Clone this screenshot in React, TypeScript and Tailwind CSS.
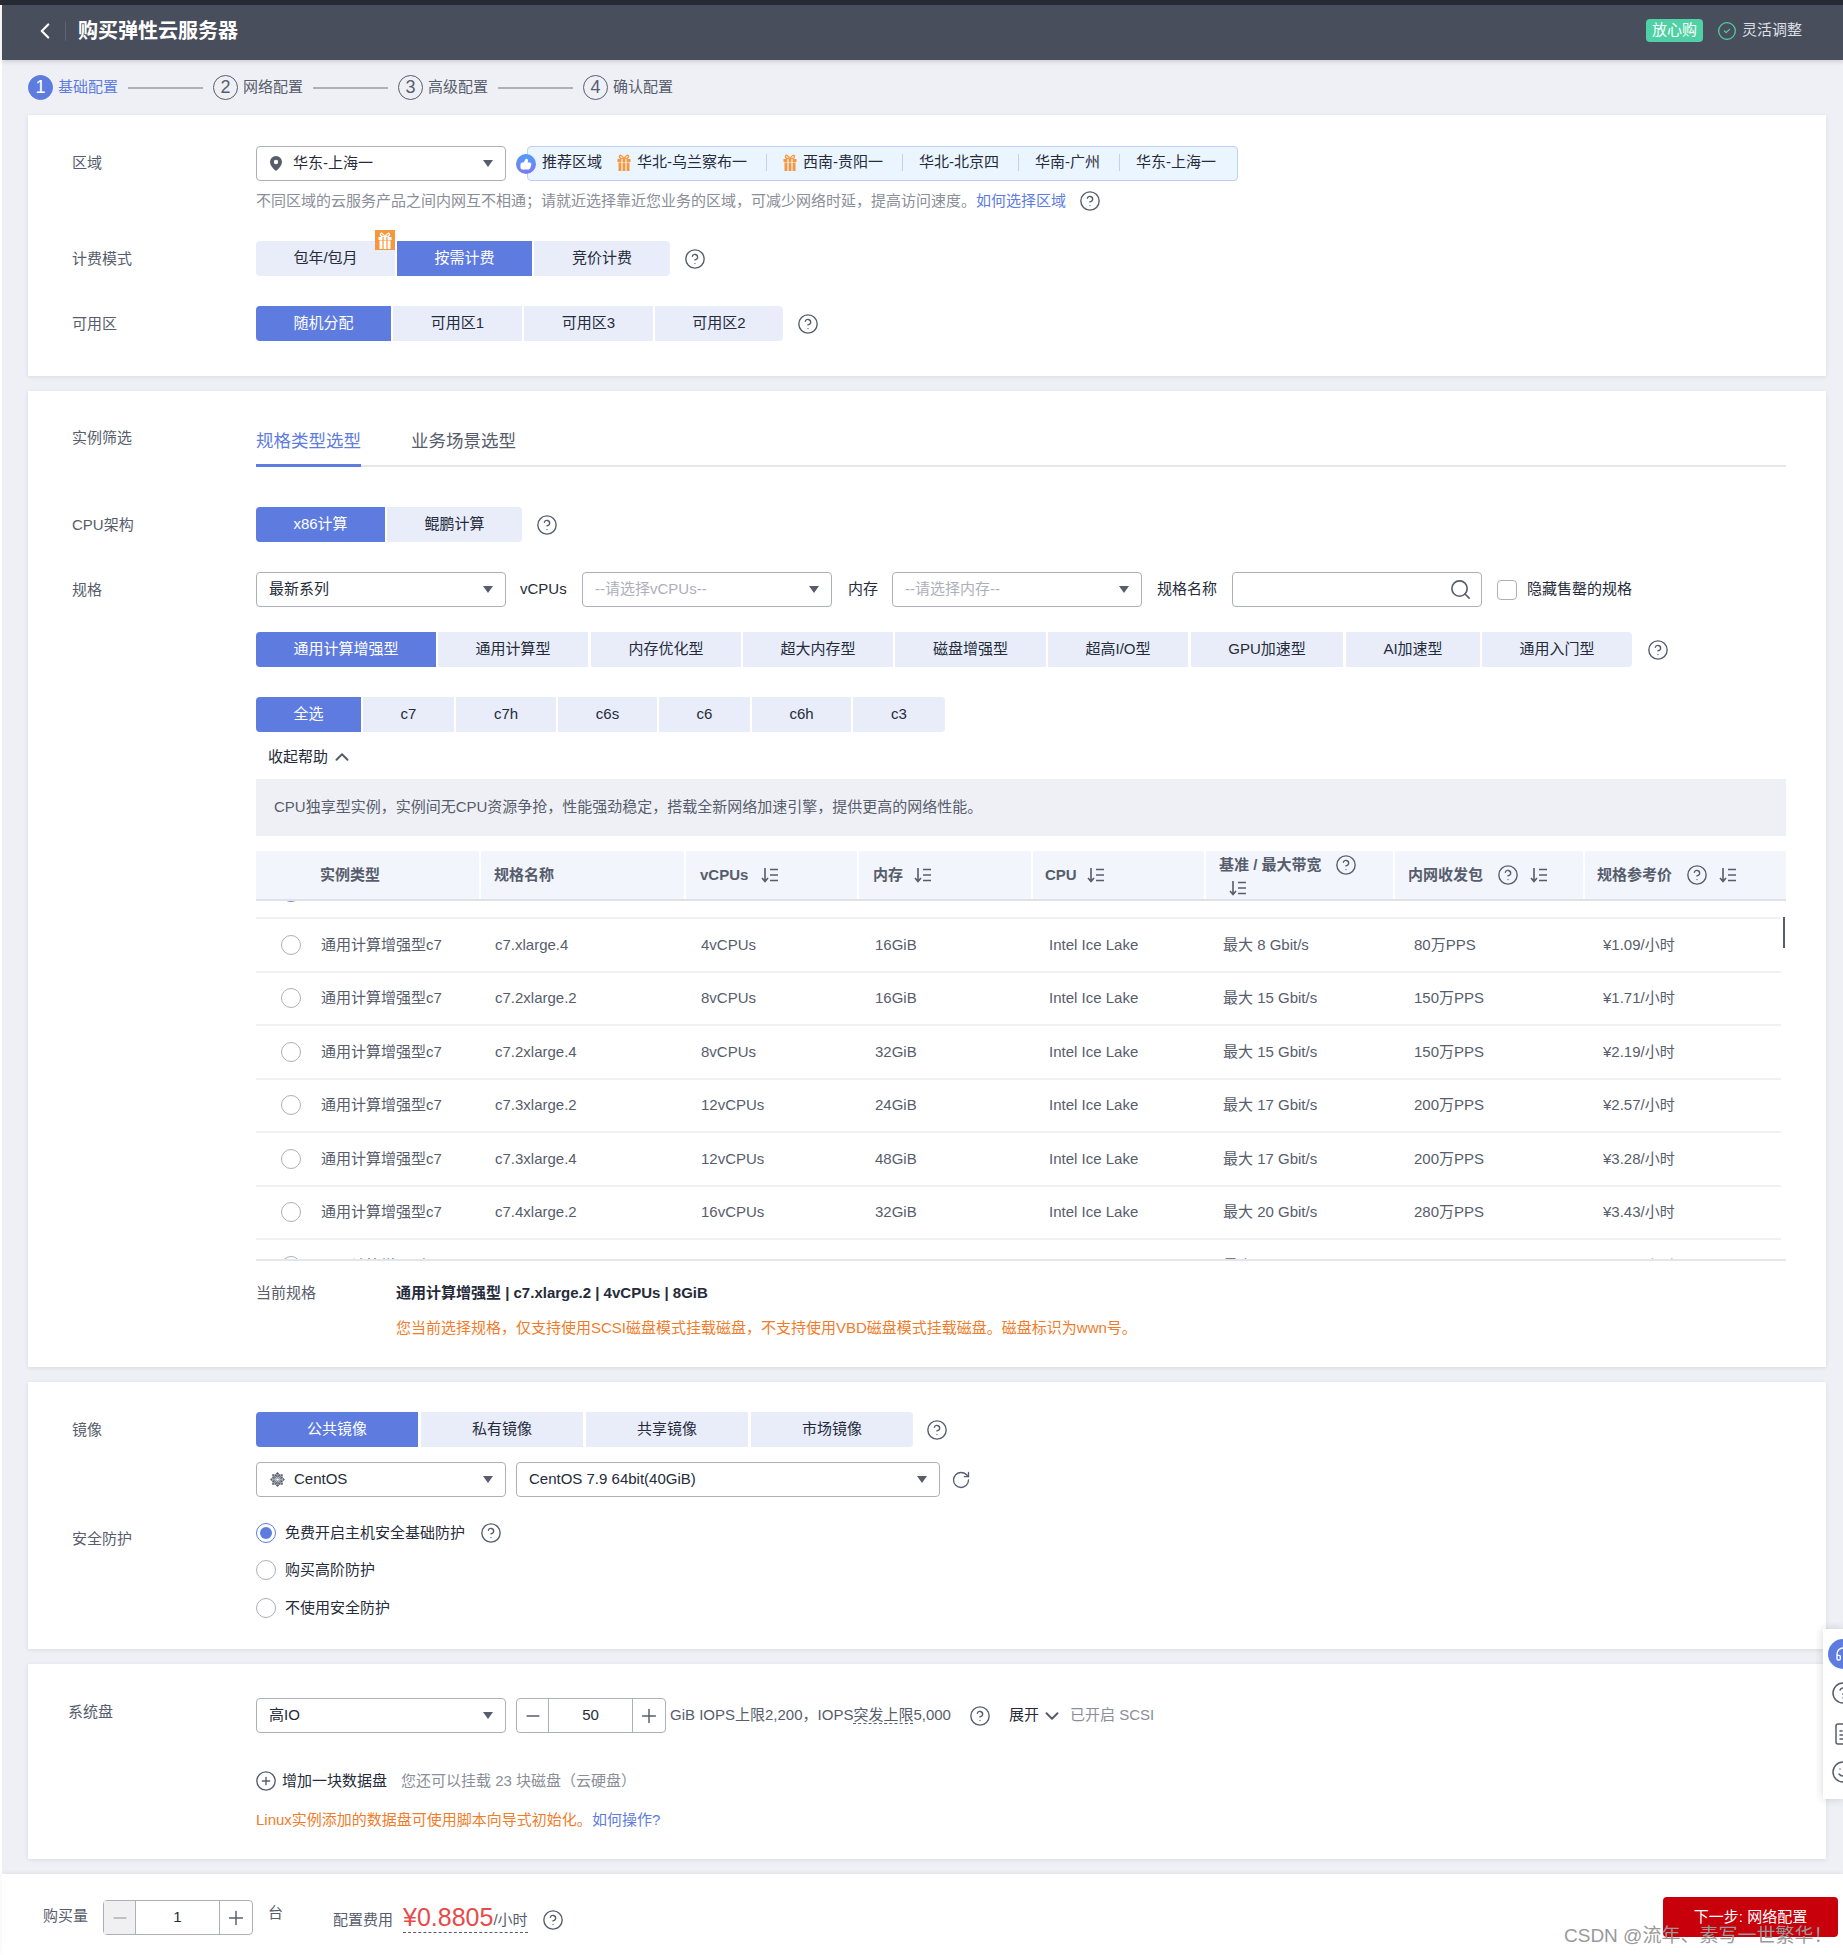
import { ChevronLeft, ChevronDown, ChevronUp, CircleCheck, CircleHelp, CirclePlus, FileText, Headphones, Minus, Plus, RotateCw, Search, Smile, ThumbsUp } from 'lucide-react'
import { FaCentos } from 'react-icons/fa'
import type { ReactNode } from 'react'

const columns = 'grid grid-cols-[225px_205px_173px_174px_173px_189px_190px_201px]'

const rows = [
  ['c7.xlarge.4', '4vCPUs', '16GiB', '最大 8 Gbit/s', '80万PPS', '¥1.09/小时'],
  ['c7.2xlarge.2', '8vCPUs', '16GiB', '最大 15 Gbit/s', '150万PPS', '¥1.71/小时'],
  ['c7.2xlarge.4', '8vCPUs', '32GiB', '最大 15 Gbit/s', '150万PPS', '¥2.19/小时'],
  ['c7.3xlarge.2', '12vCPUs', '24GiB', '最大 17 Gbit/s', '200万PPS', '¥2.57/小时'],
  ['c7.3xlarge.4', '12vCPUs', '48GiB', '最大 17 Gbit/s', '200万PPS', '¥3.28/小时'],
  ['c7.4xlarge.2', '16vCPUs', '32GiB', '最大 20 Gbit/s', '280万PPS', '¥3.43/小时'],
  ['c7.4xlarge.4', '16vCPUs', '64GiB', '最大 20 Gbit/s', '280万PPS', '¥4.37/小时'],
]

const Help = ({ className = '' }: { className?: string }) => (
  <CircleHelp size={22} strokeWidth={1.5} className={`shrink-0 text-[#575d6c] ${className}`} />
)

const Caret = () => (
  <svg width="10" height="7" viewBox="0 0 10 7" className="shrink-0">
    <polygon points="0,0 10,0 5,7" fill="#575d6c" />
  </svg>
)

const Pin = () => (
  <svg width="12" height="15" viewBox="0 0 12 15" className="ml-[1px] mr-[3px] shrink-0">
    <path fillRule="evenodd" fill="#575d6c" d="M6 0a6 6 0 0 1 6 6c0 3.500-4 7.500-6 9-2-1.500-6-5.500-6-9a6 6 0 0 1 6-6zm0 3.800a2.200 2.200 0 1 0 0 4.400 2.200 2.200 0 0 0 0-4.400z" />
  </svg>
)

const GiftIcon = ({ color, line, className = '' }: { color: string; line: string; className?: string }) => (
  <svg width="14" height="17" viewBox="0 0 14 17" className={`shrink-0 ${className}`}>
    <path d="M7 5C5.500 1.500 2.500 0 2.500 2.500 2.500 4.500 5 5 7 5c2 0 4.500-.5 4.500-2.500C11.500 0 8.500 1.500 7 5z" fill="none" stroke={color} strokeWidth="1.400" />
    <rect x="0.500" y="5" width="13" height="3" fill={color} />
    <rect x="1.500" y="8.500" width="11" height="8.500" fill={color} />
    <path d="M5 5v12M9 5v12" stroke={line} strokeWidth="1.200" />
  </svg>
)

const SortIcon = () => (
  <svg width="18" height="16" viewBox="0 0 18 16" fill="none" stroke="#575d6c" strokeWidth="1.6" className="shrink-0">
    <path d="M4 1v13M1 11l3 3.500L7 11M9 2.500h8M9 8h8M9 13.500h8" />
  </svg>
)

const Select = ({ width, placeholder, icon, children }: { width: string; placeholder?: boolean; icon?: ReactNode; children: ReactNode }) => (
  <div className={`flex h-[35px] shrink-0 items-center justify-between rounded-sm border border-[#adb0b8] bg-white pl-3 pr-[12px] ${width}`}>
    <span className={`flex items-center gap-2 ${placeholder ? 'text-[#adb0b8]' : ''}`}>
      {icon}
      {children}
    </span>
    <Caret />
  </div>
)

const Segment = ({ width, active, first, last, children }: { width: string; active?: boolean; first?: boolean; last?: boolean; children: ReactNode }) => (
  <div
    className={`flex h-[35px] shrink-0 items-center justify-center ${width} ${active ? 'bg-[#5e7ce0] text-white' : 'bg-[#e9edfa]'} ${first ? 'rounded-l-sm' : ''} ${last ? 'rounded-r-sm' : ''}`}
  >
    {children}
  </div>
)

const Row = ({ label, labelClass = '', className = '', children }: { label: string; labelClass?: string; className?: string; children: ReactNode }) => (
  <div className={`flex ${className}`}>
    <div className={`w-[184px] shrink-0 leading-[35px] text-[#575d6c] ${labelClass}`}>{label}</div>
    <div className="min-w-0 flex-1">{children}</div>
  </div>
)

const Radio = ({ checked }: { checked?: boolean }) => (
  <span className={`flex h-5 w-5 shrink-0 items-center justify-center rounded-full border bg-white ${checked ? 'border-[#5e7ce0]' : 'border-[#adb0b8]'}`}>
    {checked && <span className="h-3 w-3 rounded-full bg-[#5e7ce0]" />}
  </span>
)

const Stepper = ({ value, minusDisabled }: { value: string; minusDisabled?: boolean }) => (
  <div className="flex h-[35px] w-[150px] shrink-0 rounded-sm border border-[#adb0b8] bg-white">
    <div className={`flex w-[32px] items-center justify-center border-r border-[#adb0b8] ${minusDisabled ? 'bg-[#f0f0f3] text-[#adb0b8]' : 'text-[#575d6c]'}`}>
      <Minus size={20} strokeWidth={2} />
    </div>
    <div className="flex flex-1 items-center justify-center">{value}</div>
    <div className="flex w-[33px] items-center justify-center border-l border-[#adb0b8] text-[#575d6c]">
      <Plus size={22} strokeWidth={1.6} />
    </div>
  </div>
)

const Step = ({ n, label, active }: { n: number; label: string; active?: boolean }) => (
  <div className="flex items-center gap-[5px]">
    <span className={`flex h-[25px] w-[25px] items-center justify-center rounded-full border text-[18px] ${active ? 'border-[#5e7ce0] bg-[#5e7ce0] text-white' : 'border-[#575d6c] text-[#575d6c]'}`}>{n}</span>
    <span className={active ? 'text-[#5e7ce0]' : 'text-[#575d6c]'}>{label}</span>
  </div>
)

const Divider = () => <span className="ml-[19px] mr-[16px] h-[17px] w-px bg-[#c5d0f0]" />

const Card = ({ className, children }: { className: string; children: ReactNode }) => (
  <section className={`ml-[26px] w-[1798px] bg-white pl-[44px] pr-[40px] shadow-[0_1px_4px_rgba(37,43,58,0.1)] ${className}`}>{children}</section>
)

export default function App() {
  return (
    <div className="relative h-[1955px] w-full overflow-hidden bg-white font-['Liberation_Sans','Noto_Sans_CJK_SC',sans-serif] text-[15px] text-[#252b3a]">
      <div className="h-[5px] bg-[#262a33]" />
      <div className="ml-[2px] h-[1950px] bg-[#eef0f5]">
        <header className="flex h-[55px] items-center bg-[#484e5c] pb-[4px] text-white shadow-[0_2px_4px_rgba(37,43,58,0.15)]">
          <ChevronLeft size={26} strokeWidth={2} className="ml-[30px]" />
          <span className="ml-[7px] h-[20px] w-px bg-[#5c6270]" />
          <h1 className="ml-[12px] text-[20px] font-bold">购买弹性云服务器</h1>
          <span className="ml-auto flex h-[23px] w-[57px] items-center justify-center rounded-sm bg-[#4fd1a5]">放心购</span>
          <CircleCheck size={20} strokeWidth={1.5} className="ml-[14px] text-[#4fd1a5]" />
          <span className="ml-[5px] mr-[41px] text-[#dfe1e6]">灵活调整</span>
        </header>

        <div className="flex h-[55px] items-center pl-[26px]">
          <Step n={1} label="基础配置" active />
          <span className="mx-[10px] h-[2px] w-[75px] bg-[#adb0b8]" />
          <Step n={2} label="网络配置" />
          <span className="mx-[10px] h-[2px] w-[75px] bg-[#adb0b8]" />
          <Step n={3} label="高级配置" />
          <span className="mx-[10px] h-[2px] w-[75px] bg-[#adb0b8]" />
          <Step n={4} label="确认配置" />
        </div>

        <div className="flex flex-col gap-[15px]">
          <Card className="h-[261px] pt-[31px]">
            <Row label="区域" labelClass="-mt-[1px]">
              <div className="flex items-center">
                <Select width="w-[250px]" icon={<Pin />}>华东-上海一</Select>
                <span className="z-10 ml-[10px] flex h-5 w-5 shrink-0 items-center justify-center rounded-full bg-gradient-to-b from-[#4a9df5] to-[#7a78f0]">
                  <ThumbsUp size={12} className="fill-white text-white" />
                </span>
                <div className="-ml-[9px] flex h-[35px] w-[711px] items-center rounded-sm border border-[#bdd0f5] bg-[#ebf5ff] pb-[2px] pl-[14px]">
                  <span>推荐区域</span>
                  <GiftIcon color="#f6973e" line="#ebf5ff" className="ml-[15px] mr-[6px]" />
                  <span>华北-乌兰察布一</span>
                  <Divider />
                  <GiftIcon color="#f6973e" line="#ebf5ff" className="mr-[6px]" />
                  <span>西南-贵阳一</span>
                  <Divider />
                  <span>华北-北京四</span>
                  <Divider />
                  <span>华南-广州</span>
                  <Divider />
                  <span>华东-上海一</span>
                </div>
              </div>
              <div className="mt-[8px] flex h-[24px] items-center text-[#8a8e99]">
                不同区域的云服务产品之间内网互不相通；请就近选择靠近您业务的区域，可减少网络时延，提高访问速度。
                <span className="text-[#5e7ce0]">如何选择区域</span>
                <Help className="ml-[13px]" />
              </div>
            </Row>

            <Row label="计费模式" className="mt-[28px]">
              <div className="flex items-center gap-[2px]">
                <div className="relative">
                  <Segment width="w-[139px]" first>包年/包月</Segment>
                  <span className="absolute -top-[11px] right-0 flex h-5 w-5 items-center justify-center bg-[#f6973e]">
                    <GiftIcon color="#ffffff" line="#f6973e" />
                  </span>
                </div>
                <Segment width="w-[135px]" active>按需计费</Segment>
                <Segment width="w-[136px]" last>竞价计费</Segment>
                <Help className="ml-[12px]" />
              </div>
            </Row>

            <Row label="可用区" className="mt-[30px]">
              <div className="flex items-center gap-[2px]">
                <Segment width="w-[135px]" active first>随机分配</Segment>
                <Segment width="w-[129px]">可用区1</Segment>
                <Segment width="w-[129px]">可用区3</Segment>
                <Segment width="w-[128px]" last>可用区2</Segment>
                <Help className="ml-[12px]" />
              </div>
            </Row>
          </Card>

          <Card className="h-[976px] pt-[29px]">
            <Row label="实例筛选">
              <div className="flex h-[47px] border-b-2 border-[#e4e6ec] text-[17.5px]">
                <div className="h-[47px] w-[105px] whitespace-nowrap border-b-[3px] border-[#5e7ce0] pt-[8px] text-[#5e7ce0]">规格类型选型</div>
                <div className="ml-[50px] whitespace-nowrap pt-[8px] text-[#575d6c]">业务场景选型</div>
              </div>
            </Row>

            <Row label="CPU架构" className="mt-[40px]">
              <div className="flex items-center gap-[2px]">
                <Segment width="w-[129px]" active first>x86计算</Segment>
                <Segment width="w-[135px]" last>鲲鹏计算</Segment>
                <Help className="ml-[12px]" />
              </div>
            </Row>

            <Row label="规格" className="mt-[30px]">
              <div className="flex items-center">
                <Select width="w-[250px]">最新系列</Select>
                <span className="ml-[14px] w-[62px]">vCPUs</span>
                <Select width="w-[250px]" placeholder>--请选择vCPUs--</Select>
                <span className="ml-[16px] w-[44px]">内存</span>
                <Select width="w-[250px]" placeholder>--请选择内存--</Select>
                <span className="ml-[15px] w-[75px]">规格名称</span>
                <div className="flex h-[35px] w-[250px] items-center justify-end rounded-sm border border-[#adb0b8] pr-[9px]">
                  <Search size={23} strokeWidth={1.7} className="text-[#575d6c]" />
                </div>
                <span className="ml-[15px] h-5 w-5 rounded-sm border border-[#adb0b8]" />
                <span className="ml-[10px]">隐藏售罄的规格</span>
              </div>

              <div className="mt-[25px] flex items-center">
                <Segment width="w-[180px] mr-[2px]" active first>通用计算增强型</Segment>
                <Segment width="w-[150px] mr-[3px]">通用计算型</Segment>
                <Segment width="w-[150px] mr-[2px]">内存优化型</Segment>
                <Segment width="w-[150px] mr-[2px]">超大内存型</Segment>
                <Segment width="w-[151px] mr-[2px]">磁盘增强型</Segment>
                <Segment width="w-[140px] mr-[3px]">超高I/O型</Segment>
                <Segment width="w-[152px] mr-[3px]">GPU加速型</Segment>
                <Segment width="w-[134px] mr-[2px]">AI加速型</Segment>
                <Segment width="w-[150px]" last>通用入门型</Segment>
                <Help className="ml-[15px]" />
              </div>

              <div className="mt-[30px] flex gap-[2px]">
                <Segment width="w-[105px]" active first>全选</Segment>
                <Segment width="w-[91px]">c7</Segment>
                <Segment width="w-[100px]">c7h</Segment>
                <Segment width="w-[99px]">c6s</Segment>
                <Segment width="w-[91px]">c6</Segment>
                <Segment width="w-[99px]">c6h</Segment>
                <Segment width="w-[92px]" last>c3</Segment>
              </div>

              <div className="flex h-[47px] items-center gap-[3px] pl-[12px] pt-[3px]">
                收起帮助
                <ChevronUp size={22} strokeWidth={2.2} className="text-[#575d6c]" />
              </div>

              <div className="flex h-[57px] items-center bg-[#eef0f5] pl-[18px] text-[#575d6c]">
                CPU独享型实例，实例间无CPU资源争抢，性能强劲稳定，搭载全新网络加速引擎，提供更高的网络性能。
              </div>

              <div className={`${columns} mt-[15px] h-[50px] border-b-2 border-[#dfe1e6] bg-[#f2f5fc] font-semibold text-[#575d6c]`}>
                <div className="flex items-center border-r-2 border-white pl-[64px]">实例类型</div>
                <div className="flex items-center border-r-2 border-white pl-[13px]">规格名称</div>
                <div className="flex items-center gap-[13px] border-r-2 border-white pl-[14px]">vCPUs<SortIcon /></div>
                <div className="flex items-center gap-[11px] border-r-2 border-white pl-[14px]">内存<SortIcon /></div>
                <div className="flex items-center gap-[10px] border-r-2 border-white pl-[12px]">CPU<SortIcon /></div>
                <div className="flex flex-col justify-center gap-[4px] border-r-2 border-white pl-[13px]">
                  <span className="flex items-center gap-[13px]">基准 / 最大带宽<Help /></span>
                  <span className="pl-[10px]"><SortIcon /></span>
                </div>
                <div className="flex items-center gap-[11px] border-r-2 border-white pl-[13px]">内网收发包<Help className="ml-[3px]" /><SortIcon /></div>
                <div className="flex items-center gap-[11px] pl-[12px]">规格参考价<Help className="ml-[3px]" /><SortIcon /></div>
              </div>

              <div className="relative h-[360px] overflow-hidden border-b-2 border-[#e4e6ec] text-[#575d6c]">
                <div className="flex h-[18px] w-[1525px] items-start border-b-2 border-[#f0f1f5] pl-[25px]">
                  <div className="-mt-[19px]"><Radio checked /></div>
                </div>
                {rows.map((row) => (
                  <div key={row[0]} className={`${columns} h-[53.5px] w-[1525px] items-center border-b-2 border-[#f0f1f5]`}>
                    <div className="flex items-center pl-[25px]">
                      <Radio />
                      <span className="ml-[20px]">通用计算增强型c7</span>
                    </div>
                    <div className="pl-[14px]">{row[0]}</div>
                    <div className="pl-[15px]">{row[1]}</div>
                    <div className="pl-[16px]">{row[2]}</div>
                    <div className="pl-[16px]">Intel Ice Lake</div>
                    <div className="pl-[17px]">{row[3]}</div>
                    <div className="pl-[19px]">{row[4]}</div>
                    <div className="pl-[18px]">{row[5]}</div>
                  </div>
                ))}
                <span className="absolute right-[1px] top-[16px] h-[31px] w-[2px] bg-[#575d6c]" />
              </div>

              <div className="mt-[20px] flex h-[24px] items-center">
                <span className="w-[140px] text-[#575d6c]">当前规格</span>
                <span className="font-bold">通用计算增强型 | c7.xlarge.2 | 4vCPUs | 8GiB</span>
              </div>
              <div className="ml-[140px] mt-[11px] h-[24px] leading-[24px] text-[#f07c2a]">
                您当前选择规格，仅支持使用SCSI磁盘模式挂载磁盘，不支持使用VBD磁盘模式挂载磁盘。磁盘标识为wwn号。
              </div>
            </Row>
          </Card>

          <Card className="h-[267px] pt-[30px]">
            <Row label="镜像">
              <div className="flex items-center gap-[3px]">
                <Segment width="w-[162px]" active first>公共镜像</Segment>
                <Segment width="w-[162px]">私有镜像</Segment>
                <Segment width="w-[162px]">共享镜像</Segment>
                <Segment width="w-[162px]" last>市场镜像</Segment>
                <Help className="ml-[10px]" />
              </div>
              <div className="mt-[15px] flex items-center">
                <Select width="w-[250px]" icon={<FaCentos size={17} className="text-[#575d6c]" />}>CentOS</Select>
                <div className="ml-[10px]">
                  <Select width="w-[424px]">CentOS 7.9 64bit(40GiB)</Select>
                </div>
                <RotateCw size={20} strokeWidth={1.6} className="ml-[11px] text-[#575d6c]" />
              </div>
            </Row>
            <Row label="安全防护" labelClass="pt-[7px]" className="mt-[17px]">
              <div className="flex h-[37.5px] items-center gap-[9px]">
                <Radio checked />
                免费开启主机安全基础防护
                <Help className="ml-[6px]" />
              </div>
              <div className="flex h-[37.5px] items-center gap-[9px]">
                <Radio />
                购买高阶防护
              </div>
              <div className="flex h-[37.5px] items-center gap-[9px]">
                <Radio />
                不使用安全防护
              </div>
            </Row>
          </Card>

          <Card className="h-[195px] pt-[34px]">
            <Row label="系统盘" labelClass="-ml-[4px] w-[188px] -mt-[4px]">
              <div className="flex items-center">
                <Select width="w-[250px]">高IO</Select>
                <div className="ml-[10px]"><Stepper value="50" /></div>
                <span className="ml-[4px] whitespace-nowrap text-[#575d6c]">
                  GiB IOPS上限2,200，IOPS<span className="border-b border-dashed border-[#575d6c]">突发上限</span>5,000
                </span>
                <Help className="ml-[18px]" />
                <span className="ml-[18px]">展开</span>
                <ChevronDown size={22} strokeWidth={2.2} className="ml-[2px] text-[#575d6c]" />
                <span className="ml-[7px] text-[#8a8e99]">已开启 SCSI</span>
              </div>
              <div className="mt-[36px] flex h-[24px] items-center">
                <CirclePlus size={22} strokeWidth={1.5} className="-ml-[1px] text-[#575d6c]" />
                <span className="ml-[5px]">增加一块数据盘</span>
                <span className="ml-[14px] text-[#8a8e99]">您还可以挂载 23 块磁盘（云硬盘）</span>
              </div>
              <div className="mt-[15px] h-[24px] leading-[24px] text-[#f07c2a]">
                Linux实例添加的数据盘可使用脚本向导式初始化。<span className="text-[#5e7ce0]">如何操作?</span>
              </div>
            </Row>
          </Card>

          <footer className="relative flex h-[81px] bg-white pl-[41px] pt-[26px] shadow-[0_-1px_4px_rgba(37,43,58,0.08)]">
            <span className="w-[60px] pt-[5px] text-[#575d6c]">购买量</span>
            <Stepper value="1" minusDisabled />
            <span className="ml-[15px] pt-[2px] text-[#575d6c]">台</span>
            <span className="ml-[50px] pt-[9px] text-[#575d6c]">配置费用</span>
            <span className="ml-[10px] flex h-[33px] items-end border-b border-dashed border-[#575d6c] text-[#e84a4a]">
              <span className="text-[25px] leading-[30px]">¥0.8805</span>
              <span className="pb-[1px] text-[15px] text-[#575d6c]">/小时</span>
            </span>
            <Help className="ml-[14px] mt-[9px]" />
            <div className="-mt-[3px] ml-auto mr-[5px] flex h-[40px] w-[175px] items-center justify-center rounded-sm bg-[#c7000b] text-white">下一步: 网络配置</div>
          </footer>
        </div>
      </div>

      <div className="absolute right-0 top-[1629px] flex h-[170px] w-[20px] flex-col items-start overflow-hidden bg-white shadow-[0_0_8px_rgba(37,43,58,0.2)]">
        <span className="ml-[5px] mt-[10px] flex h-[30px] w-[30px] shrink-0 items-center justify-center rounded-full bg-[#5e7ce0] text-white">
          <Headphones size={16} />
        </span>
        <CircleHelp size={24} strokeWidth={1.5} className="ml-[8px] mt-[12px] shrink-0 text-[#575d6c]" />
        <FileText size={24} strokeWidth={1.5} className="ml-[9px] mt-[17px] shrink-0 text-[#575d6c]" />
        <Smile size={24} strokeWidth={1.5} className="ml-[8px] mt-[14px] shrink-0 text-[#575d6c]" />
      </div>

      <div className="absolute left-[1564px] top-[1924px] text-[19px] leading-[24px] text-[#999999]">CSDN @流年、素写一世繁华！</div>
    </div>
  )
}
